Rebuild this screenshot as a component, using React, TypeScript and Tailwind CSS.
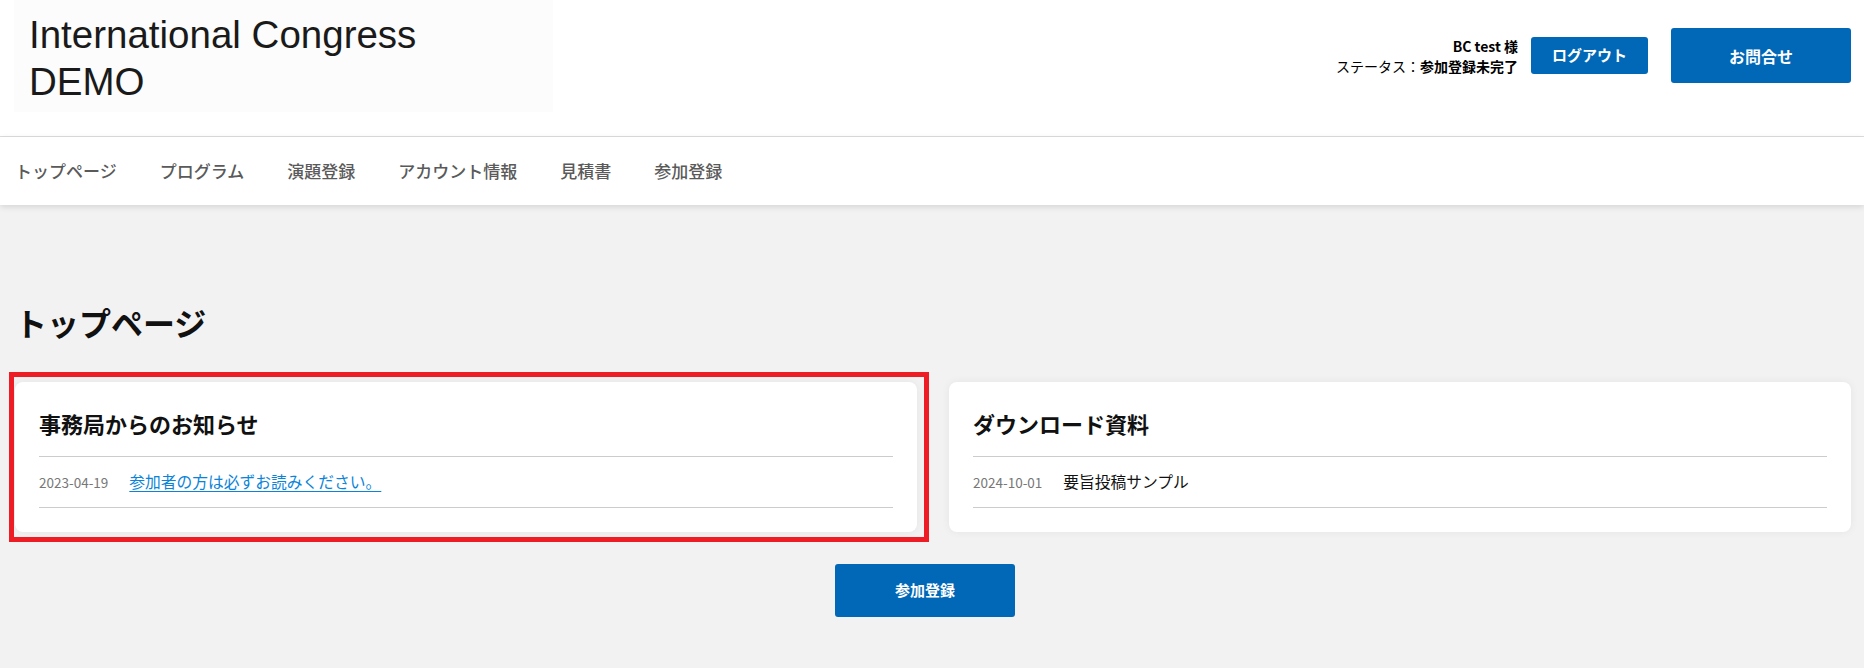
const jp = "font-['Noto_Sans_CJK_JP',sans-serif]";

const navItems = ["トップページ", "プログラム", "演題登録", "アカウント情報", "見積書", "参加登録"];

function Header() {
  return (
    <header className="flex h-[137px] items-start justify-between border-b border-[#dddddd] bg-white">
      <div className="ml-[14px] h-[112px] w-[539px] bg-[#fcfcfc] pl-[15px] pt-[11px]">
        <p className="font-['Liberation_Sans',Arial,sans-serif] text-[38.5px] leading-[47px] text-[#1a1a1a]">
          International Congress
          <br />
          DEMO
        </p>
      </div>

      <div className={`flex items-center pr-[13px] pt-[28px] ${jp}`}>
        <div className="text-right text-[14px] leading-[20px] text-black">
          <p className="font-bold">BC test 様</p>
          <p>
            ステータス：<span className="font-bold">参加登録未完了</span>
          </p>
        </div>
        <button
          type="button"
          className="ml-[13px] h-[37px] w-[117px] rounded-[3px] bg-[#0068b7] text-[15px] font-bold text-white"
        >
          ログアウト
        </button>
        <button
          type="button"
          className="ml-[23px] h-[55px] w-[180px] rounded-[3px] bg-[#0068b7] text-[16px] font-bold text-white"
        >
          お問合せ
        </button>
      </div>
    </header>
  );
}

function Nav() {
  return (
    <nav className={`relative z-10 flex h-[68px] items-center gap-[43px] bg-white pl-[15px] shadow-[0_2px_6px_rgba(0,0,0,0.12)] ${jp}`}>
      {navItems.map((item) => (
        <a key={item} className="text-[17px] font-medium text-[#5a5a5a]">
          {item}
        </a>
      ))}
    </nav>
  );
}

type Row = { date: string; label: string; link?: boolean };

function InfoCard({ title, row, marked }: { title: string; row: Row; marked?: boolean }) {
  return (
    <div className="relative">
      <section className="rounded-[8px] bg-white px-[24px] pb-[24px] pt-[25px] shadow-[0_0_8px_rgba(0,0,0,0.06)]">
        <h2 className="mb-[16px] text-[22px] font-bold leading-[33px] text-[#111111]">{title}</h2>
        <div className="flex h-[52px] items-center border-y border-[#cccccc]">
          <span className="mr-[21px] text-[13.5px] text-[#777777]">{row.date}</span>
          {row.link ? (
            <a className="text-[15.75px] text-[#0a84d8] underline underline-offset-[3px]">{row.label}</a>
          ) : (
            <span className="text-[15.75px] text-[#111111]">{row.label}</span>
          )}
        </div>
      </section>
      {marked && (
        <div className="pointer-events-none absolute -bottom-[10px] -left-[6px] -right-[12px] -top-[10px] border-[5px] border-[#ee1c25]" />
      )}
    </div>
  );
}

export default function App() {
  return (
    <div className={`min-h-[668px] bg-[#f2f2f2] ${jp}`}>
      <Header />
      <Nav />
      <main className="pl-[15px] pr-[13px] pt-[95px]">
        <h1 className="mb-[37px] text-[32px] font-bold leading-[45px] text-[#111111]">トップページ</h1>
        <div className="grid grid-cols-2 gap-[32px]">
          <InfoCard
            title="事務局からのお知らせ"
            row={{ date: "2023-04-19", label: "参加者の方は必ずお読みください。", link: true }}
            marked
          />
          <InfoCard title="ダウンロード資料" row={{ date: "2024-10-01", label: "要旨投稿サンプル" }} />
        </div>
        <div className="flex justify-center pr-[16px] pt-[32px]">
          <button
            type="button"
            className="h-[53px] w-[180px] rounded-[3px] bg-[#0068b7] text-[15px] font-bold text-white"
          >
            参加登録
          </button>
        </div>
      </main>
    </div>
  );
}
